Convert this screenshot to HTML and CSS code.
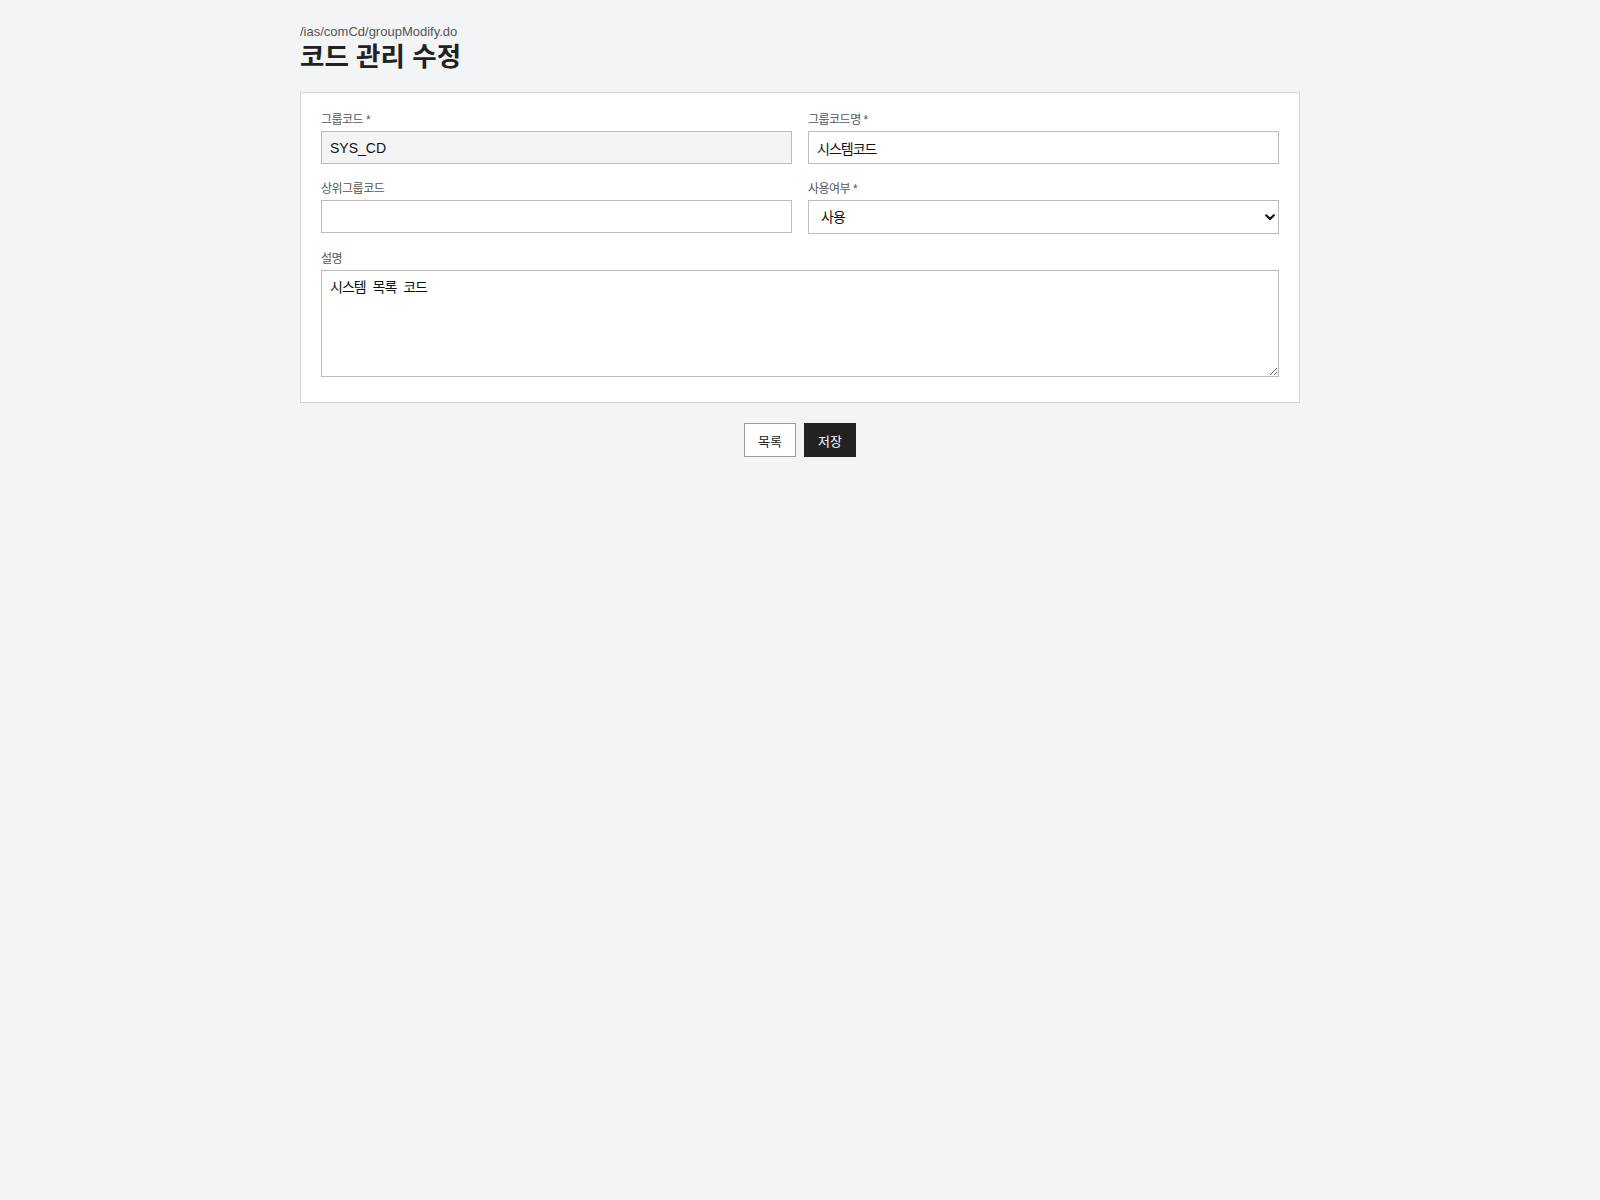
FILE: index.html
```html
<!DOCTYPE html>
<html lang="ko">
<head>
<meta charset="utf-8">
<title>코드 관리 수정</title>
<link rel="stylesheet" href="styles.css">
</head>
<body>
<div class="container">
  <div class="page-path">/ias/comCd/groupModify.do</div>
  <h1 class="page-title">코드 관리 수정</h1>

  <form class="form-box" onsubmit="return false;">
    <div class="form-grid">
      <div class="form-field">
        <label class="form-label" for="grpCd">그룹코드 *</label>
        <input class="form-input readonly" id="grpCd" type="text" value="SYS_CD" readonly>
      </div>
      <div class="form-field">
        <label class="form-label" for="grpNm">그룹코드명 *</label>
        <input class="form-input hangul" id="grpNm" type="text" value="시스템코드">
      </div>
      <div class="form-field">
        <label class="form-label" for="upGrpCd">상위그룹코드</label>
        <input class="form-input" id="upGrpCd" type="text" value="">
      </div>
      <div class="form-field">
        <label class="form-label" for="useYn">사용여부 *</label>
        <div class="select-wrap">
          <select class="form-select hangul" id="useYn">
            <option value="Y" selected>사용</option>
            <option value="N">미사용</option>
          </select>
          <svg class="select-arrow" width="10" height="7" viewBox="0 0 10 7">
            <polyline points="1.2,1.3 5,5 8.8,1.3" fill="none" stroke="#111" stroke-width="2.2" stroke-linecap="round" stroke-linejoin="round"/>
          </svg>
        </div>
      </div>
      <div class="form-field full">
        <label class="form-label" for="grpDc">설명</label>
        <textarea class="form-textarea hangul" id="grpDc">시스템 목록 코드</textarea>
      </div>
    </div>
  </form>

  <div class="button-row">
    <button type="button" class="btn">목록</button>
    <button type="button" class="btn btn-dark">저장</button>
  </div>
</div>
</body>
</html>
```

FILE: styles.css
```css
/* 코드 관리 수정 */
html,
body {
  background-color: #f3f4f6;
}

body {
  margin: 0;
  min-height: 100vh;
  font-family: "Liberation Sans", "Noto Sans CJK KR", sans-serif;
  color: #222;
}

.container {
  width: 1000px;
  margin: 0 auto;
  padding-top: 24px;
}

.page-path {
  font-size: 13px;
  line-height: 15px;
  color: #555;
}

.page-title {
  margin: 0 0 17px;
  font-size: 26.5px;
  line-height: 36px;
  font-weight: bold;
  color: #222;
}

.form-box {
  background-color: #fff;
  border: 1px solid #d6d6d6;
  padding: 20px 20px 25px;
}

.form-grid {
  display: grid;
  grid-template-columns: 1fr 1fr;
  column-gap: 16px;
  row-gap: 18px;
}

.form-field.full {
  grid-column: 1 / 3;
}

.form-label {
  display: block;
  font-size: 12px;
  line-height: 14px;
  margin-bottom: 4px;
  letter-spacing: -0.5px;
  color: #555;
}

.form-input,
.form-select,
.form-textarea {
  box-sizing: border-box;
  width: 100%;
  margin: 0;
  border: 1px solid #bcbcbc;
  border-radius: 0;
  background-color: #fff;
  color: #111;
  font-family: "Liberation Sans", "Noto Sans CJK KR", sans-serif;
  font-size: 14px;
  outline: none;
}

.hangul {
  letter-spacing: -1px;
}

.form-input {
  display: block;
  height: 33px;
  padding: 0 8px;
}

.form-input.readonly {
  background-color: #f4f4f4;
}

.select-wrap {
  position: relative;
}

.form-select {
  display: block;
  height: 34px;
  padding: 0 30px 0 12px;
  -webkit-appearance: none;
  appearance: none;
}

.select-arrow {
  position: absolute;
  right: 4px;
  top: 14px;
  pointer-events: none;
}

.form-textarea {
  display: block;
  height: 107px;
  padding: 8px;
  line-height: 17px;
  word-spacing: 4px;
  resize: vertical;
}

.button-row {
  display: flex;
  justify-content: center;
  gap: 8px;
  margin-top: 20px;
}

.btn {
  height: 34px;
  padding: 0 13px;
  border: 1px solid #9a9a9a;
  background-color: #fff;
  color: #222;
  font-family: "Liberation Sans", "Noto Sans CJK KR", sans-serif;
  font-size: 13px;
  cursor: pointer;
}

.btn-dark {
  border-color: #222;
  background-color: #222;
  color: #fff;
}
```
